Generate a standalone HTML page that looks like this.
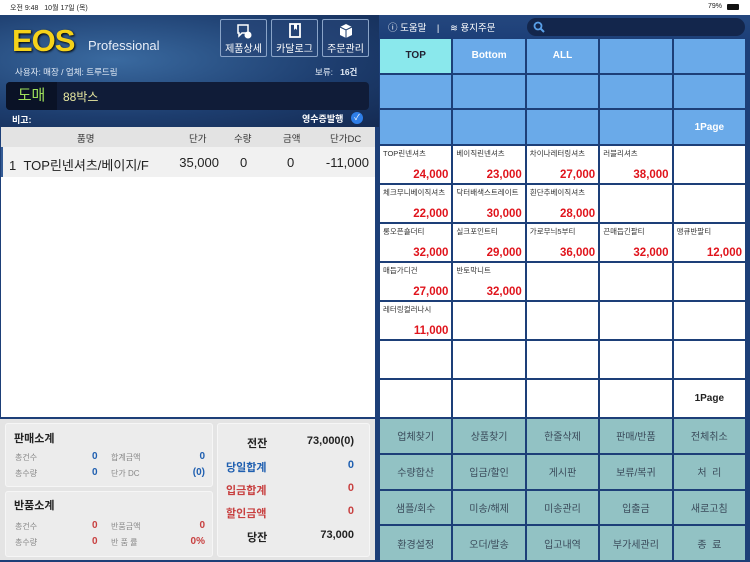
<!DOCTYPE html>
<html><head><meta charset="utf-8"><style>
*{margin:0;padding:0;box-sizing:border-box}
body{width:750px;height:562px;overflow:hidden;background:#1d3f78;font-family:"Liberation Sans","Noto Sans CJK KR",sans-serif;position:relative}
.a{position:absolute}
.status{left:0;top:0;width:750px;height:15px;background:#fff;font-size:7px;color:#222}
.hdr{left:0;top:15px;width:379px;height:112px;background:radial-gradient(ellipse at 30% 40%,#3a6aa0 0%,#1d3d6e 60%,#142a52 100%)}
.rhdr{left:379px;top:15px;width:371px;height:24px;background:linear-gradient(#24477e,#1d3f78)}
.btn{top:19px;width:47px;height:38px;border:1px solid #8aa4c8;border-radius:2px;background:rgba(40,70,120,.6);color:#fff;font-size:10px;text-align:center}
.btn svg{display:block;margin:3px auto 1px}
.grid{display:grid;gap:2px;background:#1d3f78}
.cat div{background:#6aaae9;color:#fff;font-weight:bold;font-size:10px;display:flex;align-items:center;justify-content:center}
.prod div{background:#fff;position:relative;font-size:7.5px;color:#333;padding:2px 3px}
.prod b{position:absolute;right:3px;bottom:2px;color:#e0141c;font-size:11.5px}
.fn div{background:#92c2c4;color:#3a4a5a;font-size:10px;display:flex;align-items:center;justify-content:center}
.box{background:#ececec;border:1px solid #f6f6f6;border-radius:3px}
.sm{font-size:8px;color:#888}
.bl{color:#1f5fb0;font-weight:bold}
.rd{color:#c84040;font-weight:bold}
.r{text-align:right}
</style></head><body>
<div class="a status"><span class="a" style="left:10px;top:3px">오전 9:48 &nbsp; 10월 17일 (목)</span><span class="a" style="left:708px;top:3px">79%</span><span class="a" style="left:727px;top:4px;width:12px;height:6px;background:#111;border-radius:1px"></span></div>
<div class="a hdr"></div>
<div class="a" style="left:12px;top:23px;font-size:31px;font-weight:bold;color:#f5d21a;letter-spacing:-1px;text-shadow:1px 1px 2px #000">EOS</div>
<div class="a" style="left:88px;top:38px;font-size:13px;color:#e8eef8">Professional</div>
<div class="a btn" style="left:220px"><svg width="16" height="16" viewBox="0 0 16 16"><path d="M2 2h10v8H6l-3 3v-3H2z" fill="none" stroke="#fff" stroke-width="1.5"/><circle cx="12" cy="12" r="3.5" fill="#fff"/></svg>제품상세</div>
<div class="a btn" style="left:271px"><svg width="16" height="16" viewBox="0 0 16 16"><rect x="3" y="1" width="10" height="13" fill="none" stroke="#fff" stroke-width="1.8"/><path d="M7 1v6l1.5-1.5L10 7V1" fill="#fff"/></svg>카달로그</div>
<div class="a btn" style="left:322px"><svg width="16" height="16" viewBox="0 0 16 16"><path d="M2 4l6-3 6 3v8l-6 3-6-3z" fill="#fff"/><path d="M8 7v8M2 4l6 3 6-3" stroke="#1d3d6e" stroke-width="1" fill="none"/></svg>주문관리</div>
<div class="a" style="left:15px;top:66px;font-size:8.5px;color:#e4ecf6">사용자: 매장 / 업체: 트루드림</div>
<div class="a" style="left:315px;top:66px;font-size:8.5px;color:#e4ecf6">보류: &nbsp;&nbsp;<b>16건</b></div>
<div class="a" style="left:6px;top:82px;width:363px;height:28px;background:#101c38;border-radius:4px"></div>
<div class="a" style="left:6px;top:82px;width:51px;height:28px;background:#0a1226;border-radius:4px 0 0 4px;color:#9ee05a;font-size:15px;line-height:28px;text-align:center">도매</div>
<div class="a" style="left:63px;top:88px;color:#e8e8a0;font-size:12px">88박스</div>
<div class="a" style="left:12px;top:113px;color:#fff;font-size:9px;font-weight:bold">비고:</div>
<div class="a" style="left:302px;top:112px;color:#fff;font-size:9px;font-weight:bold">영수증발행</div>
<div class="a" style="left:351px;top:112px;width:12px;height:12px;border-radius:50%;background:#2e7ee8;color:#fff;font-size:8px;text-align:center;line-height:12px">✓</div>
<div class="a" style="left:1px;top:127px;width:374px;height:290px;background:#fff"></div>
<div class="a" style="left:1px;top:127px;width:374px;height:20px;background:#e3e3e3;font-size:9.5px;color:#333">
<span class="a" style="left:76px;top:4px">품명</span><span class="a" style="left:188px;top:4px">단가</span><span class="a" style="left:233px;top:4px">수량</span><span class="a" style="left:282px;top:4px">금액</span><span class="a" style="left:329px;top:4px">단가DC</span></div>
<div class="a" style="left:1px;top:147px;width:374px;height:30px;background:#f1f1f1;border-left:2px solid #355c95;font-size:13px;color:#222">
<span class="a" style="left:6px;top:8px">1 &nbsp;TOP린넨셔츠/베이지/F</span><span class="a r" style="right:156px;top:8px">35,000</span><span class="a" style="left:237px;top:8px">0</span><span class="a" style="left:284px;top:8px">0</span><span class="a r" style="right:6px;top:8px">-11,000</span></div>
<div class="a rhdr"></div>
<div class="a" style="left:388px;top:20px;color:#fff;font-size:9.5px">ⓘ 도움말 &nbsp;&nbsp; | &nbsp;&nbsp; ≋ 용지주문</div>
<div class="a" style="left:527px;top:18px;width:218px;height:18px;background:#13264c;border-radius:9px"><svg class="a" style="left:6px;top:3px" width="12" height="12" viewBox="0 0 12 12"><circle cx="5" cy="5" r="3.5" fill="none" stroke="#5aa0e8" stroke-width="1.8"/><path d="M7.5 7.5L11 11" stroke="#5aa0e8" stroke-width="2"/></svg></div>
<div class="a grid cat" style="left:379px;top:39px;width:367px;height:105px;grid-template-columns:repeat(5,1fr);grid-template-rows:repeat(3,1fr);padding:0 1px">
<div style="background:#8ae8ec;color:#223">TOP</div><div>Bottom</div><div>ALL</div><div></div><div></div>
<div></div><div></div><div></div><div></div><div></div>
<div></div><div></div><div></div><div></div><div>1Page</div></div>
<div class="a grid prod" style="left:379px;top:146px;width:367px;height:271px;grid-template-columns:repeat(5,1fr);grid-template-rows:repeat(7,1fr);padding:0 1px">
<div>TOP린넨셔츠<b>24,000</b></div><div>베이직린넨셔츠<b>23,000</b></div><div>차이나레터링셔츠<b>27,000</b></div><div>러블리셔츠<b>38,000</b></div><div></div>
<div>체크무니베이직셔츠<b>22,000</b></div><div>닥터배색스트레이트<b>30,000</b></div><div>흰단추베이직셔츠<b>28,000</b></div><div></div><div></div>
<div>롱오픈숄더티<b>32,000</b></div><div>실크포인트티<b>29,000</b></div><div>가로무늬5부티<b>36,000</b></div><div>끈매듭긴팔티<b>32,000</b></div><div>맹큐반팔티<b>12,000</b></div>
<div>매듭가디건<b>27,000</b></div><div>반토막니트<b>32,000</b></div><div></div><div></div><div></div>
<div>레터링컬러나시<b>11,000</b></div><div></div><div></div><div></div><div></div>
<div></div><div></div><div></div><div></div><div></div>
<div></div><div></div><div></div><div></div><div style="display:flex;align-items:center;justify-content:center;font-weight:bold;font-size:10px;color:#222">1Page</div></div>
<div class="a grid fn" style="left:379px;top:419px;width:367px;height:141px;grid-template-columns:repeat(5,1fr);grid-template-rows:repeat(4,1fr);padding:0 1px">
<div>업체찾기</div><div>상품찾기</div><div>한줄삭제</div><div>판매/반품</div><div>전체취소</div>
<div>수량합산</div><div>입금/할인</div><div>게시판</div><div>보류/복귀</div><div>처 &nbsp;리</div>
<div>샘플/회수</div><div>미송/해제</div><div>미송관리</div><div>입출금</div><div>새로고침</div>
<div>환경설정</div><div>오더/발송</div><div>입고내역</div><div>부가세관리</div><div>종 &nbsp;료</div></div>
<div class="a" style="left:0;top:419px;width:375px;height:141px;background:#e4e4e4"></div>
<div class="a box" style="left:5px;top:423px;width:208px;height:64px"></div>
<div class="a box" style="left:5px;top:491px;width:208px;height:66px"></div>
<div class="a box" style="left:217px;top:423px;width:153px;height:134px"></div>
<div class="a" style="left:14px;top:430px;font-size:11px;font-weight:bold;color:#222">판매소계</div>
<div class="a sm" style="left:15px;top:452px">총건수</div><div class="a bl" style="left:92px;top:451px;font-size:10px">0</div><div class="a sm" style="left:111px;top:452px">합계금액</div><div class="a bl r" style="right:545px;top:451px;font-size:10px">0</div>
<div class="a sm" style="left:15px;top:468px">총수량</div><div class="a bl" style="left:92px;top:467px;font-size:10px">0</div><div class="a sm" style="left:111px;top:468px">단가 DC</div><div class="a bl r" style="right:545px;top:467px;font-size:10px">(0)</div>
<div class="a" style="left:14px;top:497px;font-size:11px;font-weight:bold;color:#222">반품소계</div>
<div class="a sm" style="left:15px;top:521px">총건수</div><div class="a rd" style="left:92px;top:520px;font-size:10px">0</div><div class="a sm" style="left:111px;top:521px">반품금액</div><div class="a rd r" style="right:545px;top:520px;font-size:10px">0</div>
<div class="a sm" style="left:15px;top:537px">총수량</div><div class="a rd" style="left:92px;top:536px;font-size:10px">0</div><div class="a sm" style="left:111px;top:537px">반 품 률</div><div class="a rd r" style="right:545px;top:536px;font-size:10px">0%</div>
<div class="a" style="left:247px;top:435px;font-size:11px;font-weight:bold;color:#222">전잔</div><div class="a r" style="right:396px;top:435px;font-size:11px;font-weight:bold;color:#222">73,000(0)</div>
<div class="a" style="left:226px;top:459px;font-size:11px;color:#1f5fb0;font-weight:bold">당일합계</div><div class="a bl r" style="right:396px;top:459px;font-size:11px">0</div>
<div class="a" style="left:226px;top:482px;font-size:11px;color:#c84040;font-weight:bold">입금합계</div><div class="a rd r" style="right:396px;top:482px;font-size:11px">0</div>
<div class="a" style="left:226px;top:505px;font-size:11px;color:#c84040;font-weight:bold">할인금액</div><div class="a rd r" style="right:396px;top:505px;font-size:11px">0</div>
<div class="a" style="left:247px;top:529px;font-size:11px;font-weight:bold;color:#222">당잔</div><div class="a r" style="right:396px;top:529px;font-size:11px;font-weight:bold;color:#222">73,000</div>
</body></html>
